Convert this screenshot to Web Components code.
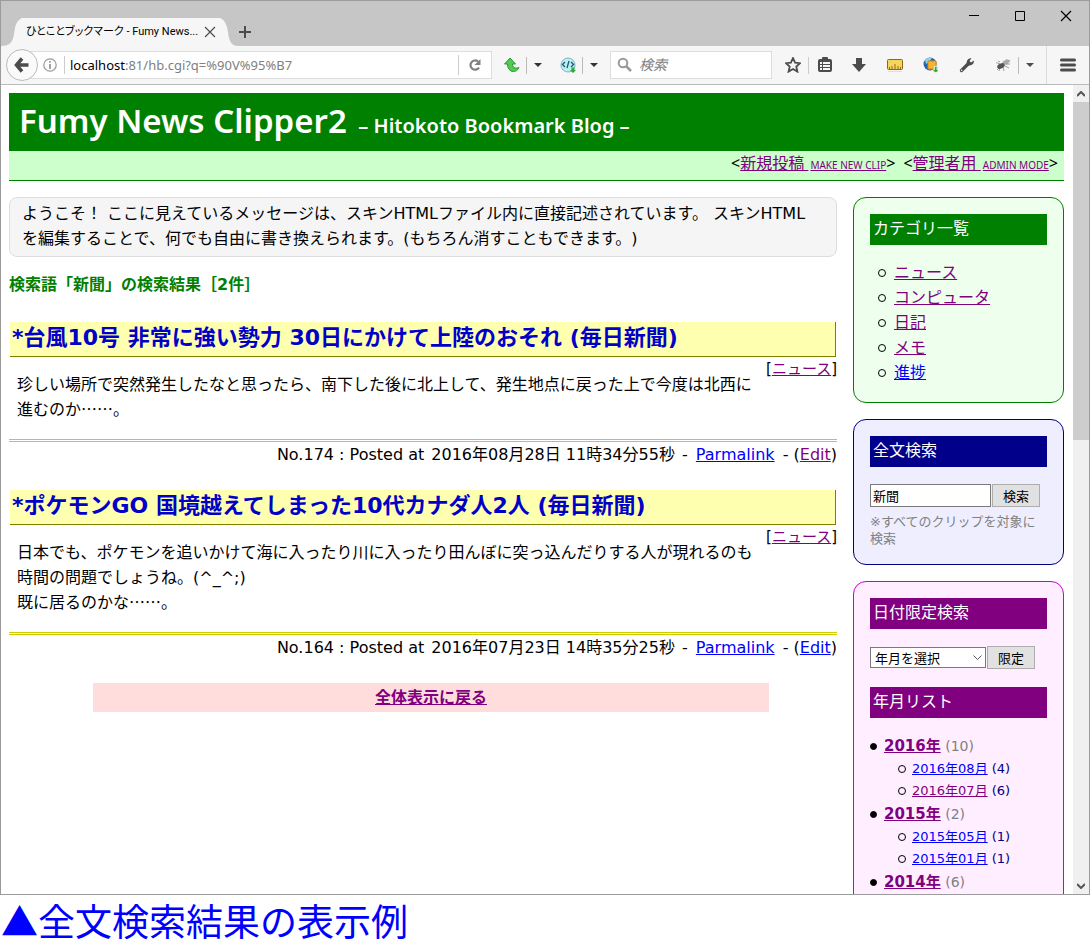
<!DOCTYPE html>
<html lang="ja">
<head>
<meta charset="utf-8">
<title>ひとことブックマーク - Fumy News Clipper2</title>
<style>
html { height: 100%; }
body {
  margin: 0; height: 100vh; display: flex; flex-direction: column; background: #fff; color: #000;
  font: 16px/25px "DejaVu Sans", "Noto Sans CJK JP", sans-serif; text-spacing-trim: space-all;
}
browser-window { flex: 1; min-height: 0; margin-right: 2px; }
.cjk { font-family: "Noto Sans CJK JP", sans-serif; line-height: 1; }
</style>
</head>
<body>
<browser-window>
  <tab-strip slot="tabs">ひとことブックマーク - Fumy News...</tab-strip>
  <nav-bar slot="nav"></nav-bar>
  <blog-header>
    <span slot="title">Fumy News Clipper2</span>
    <span slot="subtitle">– Hitokoto Bookmark Blog –</span>
  </blog-header>
  <blog-layout>
    <welcome-note>ようこそ！ ここに見えているメッセージは、スキンHTMLファイル内に直接記述されています。 スキンHTMLを編集することで、何でも自由に書き換えられます。(もちろん消すこともできます。)</welcome-note>
    <result-title>検索語「新聞」の検索結果［2件］</result-title>
    <clip-entry no="174" date="2016年08月28日 11時34分55秒" visited>
      <span slot="title">*台風10号 非常に強い勢力 30日にかけて上陸のおそれ (毎日新聞)</span>
      <span class="cjk">珍しい場所で突然発生したなと思ったら、南下した後に北上して、発生地点に戻った上で今度は北西に進むのか……。</span>
    </clip-entry>
    <clip-entry no="164" date="2016年07月23日 14時35分25秒">
      <span slot="title">*ポケモンGO 国境越えてしまった10代カナダ人2人 (毎日新聞)</span>
      日本でも、ポケモンを追いかけて海に入ったり川に入ったり田んぼに突っ込んだりする人が現れるのも時間の問題でしょうね。(^_^;)<br><span class="cjk">既に居るのかな……。</span>
    </clip-entry>
    <back-link>全体表示に戻る</back-link>
    <side-panel slot="side" theme="green">
      <panel-title>カテゴリ一覧</panel-title>
      <category-list></category-list>
    </side-panel>
    <side-panel slot="side" theme="navy">
      <panel-title>全文検索</panel-title>
      <search-form></search-form>
    </side-panel>
    <side-panel slot="side" theme="purple">
      <panel-title>日付限定検索</panel-title>
      <date-form></date-form>
      <panel-title>年月リスト</panel-title>
      <month-list></month-list>
    </side-panel>
  </blog-layout>
</browser-window>
<figure-caption>▲全文検索結果の表示例</figure-caption>

<script>
const LINKS = 'a{color:#00f}a.visited{color:#800080}';
const define = (name, html, setup) => customElements.define(name, class extends HTMLElement {
  constructor() {
    super();
    const t = document.createElement('template');
    t.innerHTML = html;
    this.attachShadow({ mode: 'open' }).append(t.content.cloneNode(true));
  }
  connectedCallback() { if (setup) setup(this, this.shadowRoot); }
});

define('browser-window', `<style>
  :host{display:flex;flex-direction:column;border:1px solid #9b9b9b;background:#fff}
  .view{flex:1;min-height:0;display:flex}
  main{flex:1;min-width:0;overflow:hidden;padding:8px 9px 0 8px}
</style>
<slot name="tabs"></slot><slot name="nav"></slot>
<div class="view"><main><slot></slot></main><scroll-track></scroll-track></div>`);

define('tab-strip', `<style>
  :host{display:flex;height:45px;background:#c6c6c6}
  .tab{display:flex;align-items:center;margin-top:17px;height:28px}
  .edge{display:block;width:17px;height:28px;flex:none}
  .edge.left{width:20px}
  .body{display:flex;align-items:center;height:28px;width:200px;background:#f6f6f6;justify-content:space-between}
  .label{padding-left:5px;font:11px/16px Roboto,"Noto Sans CJK JP",sans-serif;white-space:nowrap;font-feature-settings:"palt"}
  button{border:0;background:none;padding:0;display:grid;place-items:center;color:#4c4c4c}
  .close{width:20px;height:20px;margin-right:1px}
  .new{margin-top:17px;width:14px;height:28px}
  .win{margin-left:auto;display:flex}
  .win button{width:46px;height:30px;color:#000}
</style>
<div class="tab">
  <svg class="edge left" viewBox="0 0 20 28"><path d="M0 28C9 28 12 24 13 16L14 10Q16 0 24 0V28Z" fill="#f6f6f6"/></svg>
  <div class="body"><span class="label"><slot></slot></span>
    <button class="close" aria-label="Close tab"><svg width="12" height="12" stroke="currentColor" fill="none" stroke-width="1.200"><path d="M1 1L11 11M11 1L1 11"/></svg></button></div>
  <svg class="edge" viewBox="0 0 17 28"><path d="M17 28C11 28 8 24 7 14Q5 1-2 0V28Z" fill="#f6f6f6"/></svg>
</div>
<button class="new" aria-label="New tab"><svg width="14" height="14" stroke="currentColor" stroke-width="2"><path d="M7 1V13M1 7H13"/></svg></button>
<div class="win">
  <button aria-label="Minimize"><svg width="12" height="12" stroke="currentColor"><path d="M1 5.500H11"/></svg></button>
  <button aria-label="Maximize"><svg width="12" height="12" stroke="currentColor" fill="none"><path d="M1.500 1.500H10.500V10.500H1.500Z"/></svg></button>
  <button aria-label="Close"><svg width="12" height="12" stroke="currentColor" stroke-width="1.200"><path d="M1 1L11 11M11 1L1 11"/></svg></button>
</div>`);

define('nav-bar', `<style>
  :host{display:flex;align-items:center;height:38px;background:#f6f6f6;border-bottom:1px solid #bbb;color:#4c4c4c;font:13px/18px "Noto Sans","Noto Sans CJK JP",sans-serif}
  button{border:0;background:none;padding:0;display:grid;place-items:center;color:inherit;flex:none}
  svg{display:block}
  .back{position:relative;z-index:1;box-sizing:border-box;width:32px;height:32px;margin-left:5px;border:1px solid #bbb;border-radius:50%;background:#fafafa}
  .url{flex:1;min-width:0;display:flex;align-items:center;height:26px;margin-left:-8px;border:1px solid #ddd;border-left:0;background:#fff;color:#808080}
  .url svg{margin-left:13px}
  .addr{flex:1;min-width:0;border-left:1px solid #ccc;margin-left:7px;padding-left:5px;white-space:nowrap}
  .addr b{font-weight:400;color:#000}
  .reload{width:33px;height:20px;border-left:1px solid #ccc}
  .url .reload svg{margin:0}
  .tool{width:36px;height:28px}
  .menued{width:28px;margin-left:6px}
  .drop{width:22px;height:17px;border-left:1px solid #bbb}
  .search{display:flex;align-items:center;box-sizing:border-box;width:162px;height:28px;border:1px solid #ddd;background:#fff;margin-left:6px;flex:none}
  .search svg{margin:0 6px}
  input{border:0;outline:0;padding:0;flex:1;min-width:0;font:italic 14px/20px "Noto Sans","Noto Sans CJK JP",sans-serif}
  input::placeholder{color:#808080}
  .star{width:30px;margin-left:6px}
  .list{width:33px;height:17px;border-left:1px solid #ccc}
  .bug{width:30px;margin-left:3px}
  .menu{width:43px;height:38px;border-left:1px solid #ddd;margin-left:6px}
</style>
<button class="back" aria-label="Back"><svg width="16" height="16" fill="none" stroke="#4c4c4c" stroke-width="3.500"><path d="M8 1.500L2.500 8L8 14.500M3 8H14.500"/></svg></button>
<div class="url">
  <svg width="14" height="14" fill="none" stroke="#999" stroke-width="1.200"><circle cx="7" cy="7" r="6.200"/><path d="M7 6V11M7 3V4.800" stroke-width="1.800"/></svg>
  <span class="addr"><b>localhost</b>:81/hb.cgi?q=%90V%95%B7</span>
  <button class="reload" aria-label="Reload"><svg width="14" height="14" fill="none" stroke="#808080" stroke-width="2.200"><path d="M11 9.500A4.600 4.600 0 1 1 10 3.500"/><path d="M12.500 1V7H6.500Z" fill="#808080" stroke="none"/></svg></button>
</div>
<button class="tool menued" aria-label="Up"><svg width="16" height="16"><path d="M6 1L11.500 7H8.500C8.500 10.500 11 12 15 10.500C13.500 14 10 15.500 7 14C4.500 12.500 3.500 10 3.500 7H.5Z" fill="#54c850" stroke="#249c2c"/></svg></button>
<button class="drop" aria-label="Up menu"><svg width="8" height="4"><path d="M0 0H8L4 4Z" fill="#333"/></svg></button>
<button class="tool menued" aria-label="View source"><svg width="16" height="16"><circle cx="8" cy="8" r="7" fill="#b8f0f4" stroke="#7cb4c4"/><path d="M5 5L2.500 7.500L5 10M11 5L13.500 7.500L11 10M9 4L7 11" fill="none" stroke="#26566c" stroke-width="1.300"/><path d="M11.500 10.500H14.500V13H16L13 16L10 13H11.500Z" fill="#2aa83c"/></svg></button>
<button class="drop" aria-label="Source menu"><svg width="8" height="4"><path d="M0 0H8L4 4Z" fill="#333"/></svg></button>
<label class="search"><svg width="16" height="16" fill="none" stroke="#999" stroke-width="2"><circle cx="6" cy="6" r="4.300"/><path d="M9 9L14 14" stroke-width="2.500"/></svg><input placeholder="検索" aria-label="検索"></label>
<button class="tool star" aria-label="Bookmark"><svg width="16" height="16"><path d="M8 1L10.100 5.700L15 6.200L11.300 9.600L12.400 14.600L8 12L3.600 14.600L4.700 9.600L1 6.200L5.900 5.700Z" fill="none" stroke="#4c4c4c" stroke-width="1.800"/></svg></button>
<button class="list" aria-label="Bookmarks list"><svg width="16" height="16"><path fill="#4c4c4c" fill-rule="evenodd" d="M3 2H5V1Q5 0 6 0H10Q11 0 11 1V2H13Q15 2 15 4V13Q15 15 13 15H3Q1 15 1 13V4Q1 2 3 2ZM3 5V7H5V5ZM6 5V7H13V5ZM3 8V10H5V8ZM6 8V10H13V8ZM3 11V13H5V11ZM6 11V13H13V11Z"/></svg></button>
<button class="tool" aria-label="Downloads"><svg width="16" height="16"><path d="M5 1H11V7H15L8 15L1 7H5Z" fill="#4c4c4c"/></svg></button>
<button class="tool" aria-label="Ruler"><svg width="16" height="16"><rect x=".5" y="2.500" width="15" height="10" rx="1" fill="#f2d65c" stroke="#906420"/><path d="M2.500 12V10M5 12V9M8 12V7M11 12V9M13.500 12V10" stroke="#a06420"/><path d="M1 14.500H15" stroke="#ddd"/></svg></button>
<button class="tool" aria-label="Web gallery"><svg width="16" height="16"><circle cx="7" cy="7" r="6.500" fill="#2464ac"/><path d="M2 3Q5 0 9 1L6 5L3 7Z" fill="#8cd4ec"/><path d="M5 4H13V12H5Z" fill="#f8b42c" stroke="#d88414"/><path d="M11 9H15V15H10Z" fill="#ccecc4"/><path d="M12 10V13H10L13 15.500L15 13H13.500V10Z" fill="#3c9c3c"/></svg></button>
<button class="tool" aria-label="Tools"><svg width="16" height="16"><path d="M2.500 13.500L9 7" stroke="#4c4c4c" stroke-width="3.200" stroke-linecap="round"/><path d="M12.500 1.200L10.500 4L12 5.500L14.800 3.500C15.500 7 12 9.500 8.500 8C6.500 5 8.500 .5 12.500 1.200Z" fill="#4c4c4c"/><circle cx="2.700" cy="13.300" r=".8" fill="#f6f6f6"/></svg></button>
<button class="tool bug" aria-label="Firebug"><svg width="16" height="16"><path d="M8 6L14 2.500L15.500 4L11 8ZM7 5L12 2L13 3L9 6Z" fill="#aaa"/><g fill="none" stroke="#888" stroke-width=".8"><path d="M1 5.500L5 7M2 13L5 10M8 10L9 14M10 9L14 11M5 5L3 4M11 7L15 7M5 11L4 14"/></g><ellipse cx="6" cy="9" rx="4" ry="2.400" fill="#555" transform="rotate(-25 6 9)"/></svg></button>
<button class="drop" aria-label="Firebug menu"><svg width="8" height="4"><path d="M0 0H8L4 4Z" fill="#4c4c4c"/></svg></button>
<button class="menu" aria-label="Menu"><svg width="16" height="14"><path d="M1.500 2H14.500M1.500 7H14.500M1.500 12H14.500" stroke="#4c4c4c" stroke-width="3" stroke-linecap="round"/></svg></button>`);

define('scroll-track', `<style>
  :host{display:flex;flex-direction:column;width:16px;background:#f0f0f0}
  button{border:0;padding:0;background:none;height:17px;display:grid;place-items:center}
  .thumb{flex:338;background:#cdcdcd}.rest{flex:436}
</style>
<button aria-label="Scroll up"><svg width="8" height="6" fill="none" stroke="#555" stroke-width="2"><path d="M0 5L4 1L8 5"/></svg></button>
<div class="thumb"></div><div class="rest"></div>
<button aria-label="Scroll down"><svg width="8" height="6" fill="none" stroke="#555" stroke-width="2"><path d="M0 1L4 5L8 1"/></svg></button>`);

define('blog-header', `<style>${LINKS}
  :host{display:block}
  h1{margin:0;background:#008000;color:#fff;padding:8px 10px 10px;font:600 33px/40px "Noto Sans","Open Sans",sans-serif;white-space:nowrap}
  small{font-size:20px;line-height:1;margin-left:3px}
  nav{background:#cfc;border-bottom:1px solid #008000;padding:0 6px 4px;display:flex;justify-content:flex-end;gap:8px;white-space:nowrap;font-family:"Noto Sans","Noto Sans CJK JP",sans-serif}
  .en{font-size:10px;line-height:1;margin-left:2px}
</style>
<h1><slot name="title"></slot> <small><slot name="subtitle"></slot></small></h1>
<nav><span>&lt;<a class="visited" href="#new">新規投稿 <span class="en">MAKE NEW CLIP</span></a>&gt;</span><span>&lt;<a class="visited" href="#admin">管理者用 <span class="en">ADMIN MODE</span></a>&gt;</span></nav>`);

define('blog-layout', `<style>
  :host{display:grid;grid-template-columns:minmax(0,1fr) 211px;gap:16px;padding-top:16px}
  aside{display:flex;flex-direction:column;gap:16px}
</style><section><slot></slot></section><aside><slot name="side"></slot></aside>`);

define('welcome-note', `<style>
  :host{display:block;border:1px solid #ddd;border-radius:8px;background:#f5f5f5;padding:3px 20px 5px 12px}
</style><slot></slot>`);

define('result-title', `<style>
  :host{display:block;margin:15px 0 25px}
  h2{margin:0;color:#008000;font:inherit;font-weight:700}
</style><h2><slot></slot></h2>`);

define('clip-entry', `<style>${LINKS}
  :host{display:block;margin-bottom:23px}
  h2{margin:0 1px;height:34px;background:#ffffb0;border:solid #808000;border-width:0 1px 1px 0;padding-left:2px;color:#0000c8;font-size:22px;line-height:32px;white-space:nowrap}
  .cat{float:right;font-size:15px;line-height:25px;margin-left:8px}
  .text{padding:15px 8px 17px}
  footer{border-top:3px double #cc0;text-align:right;clear:both}
  #date{margin:0 2px}
  .perma{margin:0 3px}
</style>
<h2><slot name="title"></slot></h2>
<div class="cat">[<a class="visited" href="#news">ニュース</a>]</div>
<div class="text"><slot></slot></div>
<footer>No.<span id="no"></span> : Posted at <span id="date"></span> - <a class="perma" href="#permalink">Parmalink</a> - (<a id="edit" href="#edit">Edit</a>)</footer>`,
(el, root) => {
  root.getElementById('no').textContent = el.getAttribute('no');
  root.getElementById('date').textContent = el.getAttribute('date');
  root.getElementById('edit').className = el.hasAttribute('visited') ? 'visited' : '';
});

define('back-link', `<style>${LINKS}
  :host{display:block;margin:0 68px 0 84px;background:#fdd;padding:2px;text-align:center;font-weight:700}
</style><a class="visited" href="#all"><slot></slot></a>`);

define('side-panel', `<style>
  :host{display:block;border:1px solid var(--edge);border-radius:13px;background:var(--fill);padding:16px 16px 17px}
  :host([theme=green]){--edge:#008000;--fill:#efe;--head:#008000}
  :host([theme=navy]){--edge:#000080;--fill:#eef;--head:#00008b}
  :host([theme=purple]){--edge:#c0c;--fill:#fef;--head:#800080}
</style><slot></slot>`);

define('panel-title', `<style>
  :host{display:block}
  h3{margin:0;padding:2px 3px 4px;background:var(--head);color:#fff;font:inherit}
</style><h3><slot></slot></h3>`);

const BULLETS = `
  ul{margin:0;padding:0;list-style:none}
  .row{display:flex;align-items:center;white-space:pre}
  .row::before{content:"";box-sizing:border-box;width:8px;height:8px;border:1px solid #000;border-radius:50%;margin-right:8px;flex:none}`;

define('category-list', `<style>${LINKS}${BULLETS}
  :host{display:block;padding:15px 0 0 8px}
</style>
<ul><li class="row"><a class="visited" href="#news">ニュース</a></li><li class="row"><a class="visited" href="#computer">コンピュータ</a></li><li class="row"><a class="visited" href="#diary">日記</a></li><li class="row"><a class="visited" href="#memo">メモ</a></li><li class="row"><a href="#progress">進捗</a></li></ul>`);

const CONTROLS = `
  form{display:flex;align-items:center;gap:1px}
  input,select,button{box-sizing:border-box;margin:0;border-radius:0;font:13px/17px "Noto Sans CJK JP",sans-serif;color:#000}
  input,select{border:1px solid #7a7a7a;background:#fff}
  button{width:48px;height:23px;padding:0;border:1px solid #adadad;background:#e1e1e1}`;

define('search-form', `<style>${CONTROLS}
  :host{display:block;padding-top:17px}
  input{width:121px;height:23px;padding:1px 2px}
  p{margin:6px 0 0;font-size:13px;line-height:17px;color:#808080}
</style>
<form><input value="新聞" aria-label="検索語"><button type="button">検索</button></form>
<p>※すべてのクリップを対象に検索</p>`);

define('date-form', `<style>${CONTROLS}
  :host{display:block;padding:17px 0 18px}
  .pick{display:grid;width:116px;align-items:center}
  .pick>*{grid-area:1/1}
  select{appearance:none;width:100%;height:21px;padding:0 4px}
  svg{justify-self:end;margin-right:4px;pointer-events:none}
</style>
<form><span class="pick"><select aria-label="年月"><option>年月を選択</option></select><svg width="9" height="6" fill="none" stroke="#555"><path d="M.5 .5L4.500 4.500L8.500 .5"/></svg></span><button type="button">限定</button></form>`);

define('month-list', `<style>${LINKS}${BULLETS}
  :host{display:block;padding-top:16px}
  ul ul{padding-left:28px;font-size:13px;line-height:22px;color:#000080}
  ul ul .row::before{margin-right:6px}
  .year{height:24px;font-size:15px;line-height:24px;color:#808080}
  .year::before{width:7px;height:7px;background:#000;margin-right:7px}
  .count{font-size:14px}
</style><ul id="years"></ul>`, (el, root) => {
  const data = [['2016', 10, [['08', 4], ['07', 6, 1]]], ['2015', 2, [['05', 1], ['01', 1]]], ['2014', 6, []]];
  root.getElementById('years').innerHTML = data.map(([y, n, months]) =>
    `<li><div class="row year"><a class="visited" href="#${y}"><b>${y}年</b></a><span class="count"> (${n})</span></div><ul>${months.map(([m, c, seen]) =>
      `<li class="row"><a class="${seen ? 'visited' : ''}" href="#${y}${m}">${y}年${m}月</a> (${c})</li>`).join('')}</ul></li>`).join('');
});

define('figure-caption', `<style>
  :host{display:block;padding-left:1px;color:#00f;font:37px/50px "Noto Sans CJK JP",sans-serif;white-space:nowrap}
</style><slot></slot>`);
</script>
</body>
</html>
